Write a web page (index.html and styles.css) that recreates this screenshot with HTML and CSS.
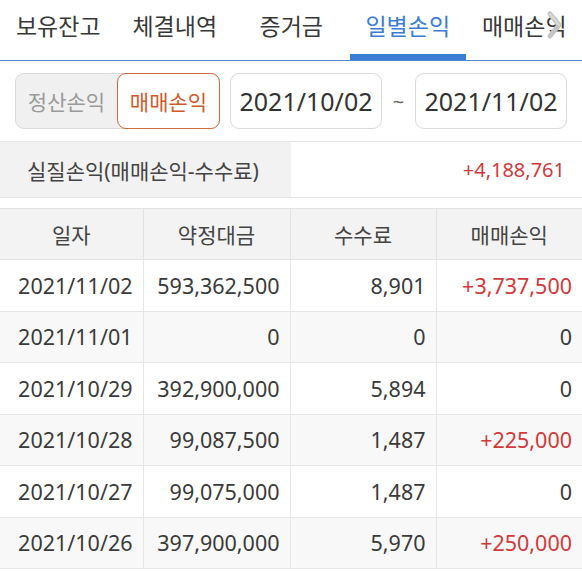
FILE: index.html
```html
<!DOCTYPE html>
<html lang="ko">
<head>
<meta charset="utf-8">
<link rel="stylesheet" href="styles.css">
</head>
<body>
<div class="page">
  <nav class="tabs">
    <div class="tab">보유잔고</div>
    <div class="tab">체결내역</div>
    <div class="tab">증거금</div>
    <div class="tab active">일별손익</div>
    <div class="tab">매매손익</div>
    <svg class="more" width="18" height="32" viewBox="0 0 18 32">
      <path d="M4 5 L13 16 L4 27" fill="none" stroke="#c4c4c4" stroke-width="5" stroke-linecap="round" stroke-linejoin="round"/>
      <path d="M4 5 L13 16" fill="none" stroke="#dadada" stroke-width="2" stroke-linecap="round"/>
    </svg>
  </nav>

  <div class="filter">
    <div class="seg">
      <div class="seg-item">정산손익</div>
      <div class="seg-item on">매매손익</div>
    </div>
    <div class="date">2021/10/02</div>
    <div class="tilde">~</div>
    <div class="date">2021/11/02</div>
  </div>

  <div class="summary">
    <div class="sum-label">실질손익(매매손익-수수료)</div>
    <div class="sum-value plus">+4,188,761</div>
  </div>

  <table class="grid">
    <colgroup>
      <col class="c1"><col class="c2"><col class="c3"><col class="c4">
    </colgroup>
    <thead>
      <tr><th>일자</th><th>약정대금</th><th>수수료</th><th>매매손익</th></tr>
    </thead>
    <tbody>
      <tr><td>2021/11/02</td><td>593,362,500</td><td>8,901</td><td class="plus">+3,737,500</td></tr>
      <tr class="alt"><td>2021/11/01</td><td>0</td><td>0</td><td>0</td></tr>
      <tr><td>2021/10/29</td><td>392,900,000</td><td>5,894</td><td>0</td></tr>
      <tr class="alt"><td>2021/10/28</td><td>99,087,500</td><td>1,487</td><td class="plus">+225,000</td></tr>
      <tr><td>2021/10/27</td><td>99,075,000</td><td>1,487</td><td>0</td></tr>
      <tr class="alt"><td>2021/10/26</td><td>397,900,000</td><td>5,970</td><td class="plus">+250,000</td></tr>
    </tbody>
  </table>
</div>
</body>
</html>
```

FILE: styles.css
```css
* { box-sizing: border-box; }
html, body { margin: 0; padding: 0; background: #fff; }
body {
  font-family: "Noto Sans", "Noto Sans CJK KR", sans-serif;
  color: #3a3a3a;
}
.page { width: 582px; height: 571px; overflow: hidden; }

.tabs {
  position: relative;
  display: flex;
  height: 61px;
  border-bottom: 1px solid #4a8ad6;
}
.tab {
  flex: 0 0 116.5px;
  height: 60px;
  display: flex;
  align-items: center;
  justify-content: center;
  padding-bottom: 4px;
  font-size: 23px;
  color: #383838;
  border-bottom: 6px solid transparent;
  white-space: nowrap;
}
.tab.active {
  color: #3a7ed4;
  border-bottom-color: #3a7ed4;
}
.more { position: absolute; left: 546px; top: 9px; }

.filter {
  display: flex;
  align-items: center;
  padding: 12px 0 0 15px;
  height: 68px;
}
.seg {
  display: flex;
  width: 205px;
  height: 56px;
  background: #f0f0f0;
  border: 1px solid #d9d9d9;
  border-radius: 9px;
}
.seg-item {
  flex: 1;
  display: flex;
  align-items: center;
  justify-content: center;
  font-size: 21px;
  color: #9a9a9a;
}
.seg-item.on {
  margin: -1px -1px -1px 0;
  background: #fff;
  color: #d25a2a;
  border: 1.5px solid #d36a3e;
  border-radius: 9px;
}
.date {
  margin-left: 10px;
  width: 152px;
  height: 56px;
  display: flex;
  align-items: center;
  justify-content: center;
  border: 1px solid #dadada;
  border-radius: 9px;
  font-size: 25px;
  color: #333;
}
.tilde {
  width: 33px;
  text-align: center;
  font-size: 20px;
  color: #666;
}
.tilde + .date { margin-left: 0; }

.summary {
  display: flex;
  margin-top: 12px;
  height: 57px;
  border-top: 1px solid #e4e4e4;
  border-bottom: 1px solid #e4e4e4;
}
.sum-label {
  width: 291px;
  background: #f2f2f2;
  display: flex;
  align-items: center;
  padding-left: 27px;
  font-size: 21px;
  color: #444;
}
.sum-value {
  flex: 1;
  display: flex;
  align-items: center;
  justify-content: flex-end;
  padding-right: 17px;
  font-size: 20px;
}
.plus { color: #d2393b; }

.grid {
  margin-top: 10px;
  width: 582px;
  border-collapse: collapse;
  table-layout: fixed;
}
.c1 { width: 143px; }
.c2 { width: 147px; }
.c3 { width: 146px; }
.c4 { width: 146px; }
.grid th {
  height: 51px;
  background: #f3f3f3;
  font-weight: normal;
  font-size: 21px;
  color: #444;
  border: 1px solid #e2e2e2;
  border-left: 0;
}
.grid td {
  height: 51.5px;
  text-align: right;
  padding: 0 10px 0 0;
  font-size: 21.5px;
  color: #3a3a3a;
  border: 1px solid #e6e6e6;
  border-left: 0;
}
.grid th:last-child, .grid td:last-child { border-right: 0; }
.grid td.plus { color: #d2393b; }
.grid tr.alt td { background: #f8f8f8; }
```
